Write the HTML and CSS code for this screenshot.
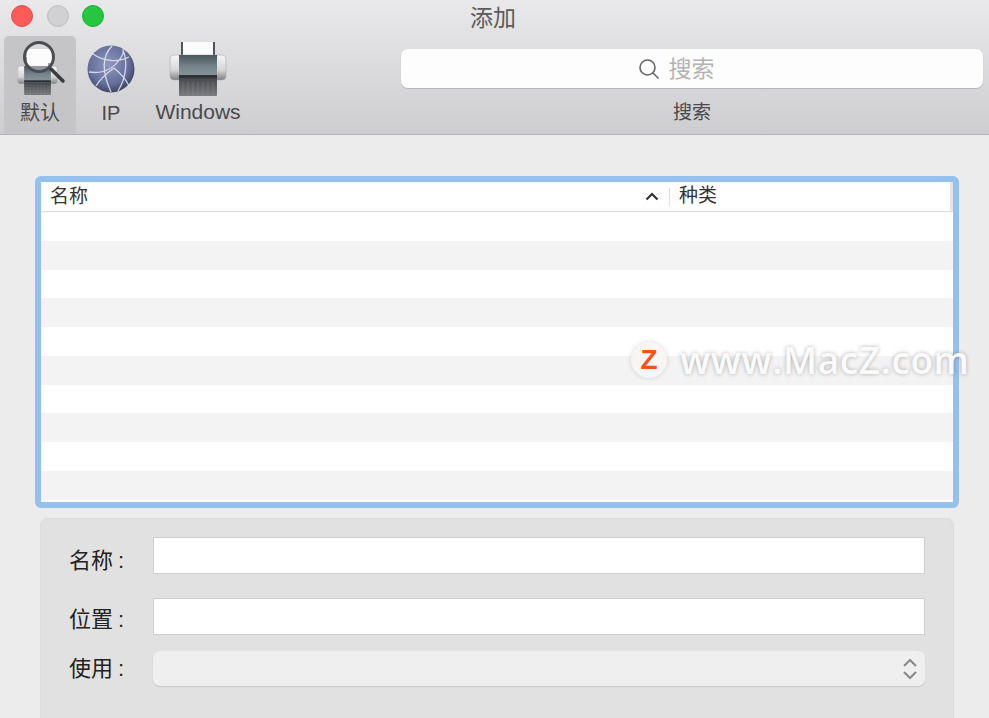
FILE: index.html
```html
<!DOCTYPE html>
<html>
  <head>
  <meta charset="UTF-8">
  <meta name="viewport" content="width=device-width,initial-scale=1.0">
  <link rel="stylesheet" href="styles.css">
  </head>
  <body>
    <svg class="defs" width="0" height="0">
      <defs>
        <linearGradient id="p_side" x1="0" y1="0" x2="0" y2="1">
          <stop offset="0" stop-color="#f6f6f6"/>
          <stop offset="0.6" stop-color="#d6d6d6"/>
          <stop offset="1" stop-color="#7d7f81"/>
        </linearGradient>
        <linearGradient id="p_body" x1="0" y1="0" x2="0" y2="1">
          <stop offset="0" stop-color="#4c565d"/>
          <stop offset="0.5" stop-color="#75838b"/>
          <stop offset="1" stop-color="#8a979e"/>
        </linearGradient>
        <linearGradient id="p_tray" x1="0" y1="0" x2="0" y2="1">
          <stop offset="0" stop-color="#45484b"/>
          <stop offset="1" stop-color="#7a7c7e"/>
        </linearGradient>
        <radialGradient id="g_ball" cx="0.45" cy="0.4" r="0.65">
          <stop offset="0" stop-color="#8f98bd"/>
          <stop offset="0.65" stop-color="#646f9b"/>
          <stop offset="1" stop-color="#363b55"/>
        </radialGradient>
        <symbol id="printer" viewBox="0 0 58 54">
          <rect x="12" y="0" width="34" height="15" fill="#50565a"/>
          <rect x="14" y="0" width="30" height="14" fill="#fbfbfb"/>
          <rect x="1" y="13" width="56" height="25" rx="4" fill="url(#p_side)" stroke="#a9aaab" stroke-width=".6"/>
          <rect x="10" y="13" width="38" height="23" fill="url(#p_body)"/>
          <rect x="10" y="33" width="38" height="3" fill="#2f3336"/>
          <path d="M10 36h38v17a1 1 0 0 1-1 1H11a1 1 0 0 1-1-1z" fill="url(#p_tray)"/>
          <path d="M14 40v13M19 40v13M24 40v13M29 40v13M34 40v13M39 40v13M44 40v13" stroke="#8c8e90" stroke-width="1" opacity=".4"/>
        </symbol>
      </defs>
    </svg>

    <div class="toolbar">
      <div class="title_row">
        <div class="lights">
          <span class="light red"></span>
          <span class="light grey"></span>
          <span class="light green"></span>
        </div>
        <div class="title">添加</div>
      </div>
      <div class="tool_row">
        <div class="tool tool_default">
          <div class="tool_icon">
            <svg class="icon_default" width="54" height="62" viewBox="0 0 54 62">
              <use href="#printer" x="2" y="21" width="41" height="38"/>
              <rect x="12" y="13" width="25" height="14" fill="#fbfbfb"/>
              <circle cx="24" cy="21" r="14.5" fill="#fff" fill-opacity=".35" stroke="#4b4e50" stroke-width="3"/>
              <path d="M36 33l12 12" stroke="#3a3c3e" stroke-width="3.5" stroke-linecap="round"/>
            </svg>
          </div>
          <span class="tool_label">默认</span>
        </div>
        <div class="tool tool_ip">
          <div class="tool_icon">
            <svg width="48" height="48" viewBox="0 0 48 48">
              <circle cx="24" cy="24" r="23.5" fill="url(#g_ball)"/>
              <path d="M6 9c10 7 24 9 36 3M2 27c13 2 24-3 31-13 3-4 4-7 3-10M25 1c-9 9-11 24-1 46M27 23c6 5 12 11 15 18M27 23c-7 5-14 11-18 18M36 5c5 12 3 28-5 41" fill="none" stroke="#e6e9f8" stroke-width="1.3" opacity=".85"/>
            </svg>
          </div>
          <span class="tool_label">IP</span>
        </div>
        <div class="tool tool_win">
          <div class="tool_icon">
            <svg width="58" height="54"><use href="#printer" width="58" height="54"/></svg>
          </div>
          <span class="tool_label">Windows</span>
        </div>
        <div class="search_block">
          <div class="search_field">
            <svg class="search_glass" width="22" height="22" viewBox="0 0 22 22">
              <circle cx="9.5" cy="9.5" r="7.5" fill="none" stroke="#666" stroke-width="1.6"/>
              <path d="M15 15l5.5 5.5" stroke="#666" stroke-width="1.6"/>
            </svg>
            <span class="search_hint">搜索</span>
          </div>
          <span class="search_label">搜索</span>
        </div>
      </div>
    </div>

    <div class="content">
      <div class="list_frame">
        <div class="list_head">
          <div class="col_name">
            <span>名称</span>
            <svg class="sort_arrow" width="14" height="9" viewBox="0 0 14 9">
              <path d="M1.5 7.5L7 2l5.5 5.5" fill="none" stroke="#333" stroke-width="2.2"/>
            </svg>
          </div>
          <div class="col_kind">种类</div>
        </div>
        <div class="list_rows">
          <div class="list_row"></div>
          <div class="list_row"></div>
          <div class="list_row"></div>
          <div class="list_row"></div>
          <div class="list_row"></div>
          <div class="list_row"></div>
          <div class="list_row"></div>
          <div class="list_row"></div>
          <div class="list_row"></div>
          <div class="list_row"></div>
        </div>
      </div>

      <div class="info_panel">
        <div class="info_row row_name">
          <span class="info_label">名称<span class="colon">:</span></span>
          <div class="info_input"></div>
        </div>
        <div class="info_row row_place">
          <span class="info_label">位置<span class="colon">:</span></span>
          <div class="info_input"></div>
        </div>
        <div class="info_row row_use">
          <span class="info_label">使用<span class="colon">:</span></span>
          <div class="info_select">
            <svg width="16" height="26" viewBox="0 0 16 26">
              <path d="M2 10l6-6 6 6M2 16l6 6 6-6" fill="none" stroke="#8a8a8a" stroke-width="2.2"/>
            </svg>
          </div>
        </div>
      </div>
    </div>

    <div class="watermark">
      <span class="mark_logo">Z</span>
      <span class="mark_text">www.MacZ.com</span>
    </div>
  </body>
</html>
```

FILE: styles.css
```css
*{
  margin:0;
  padding:0;
  box-sizing:border-box;
}
html,body{
  height:100%;
  overflow:hidden;
}
body{
  position:relative;
  background-color:#ececec;
  font-family:"Liberation Sans","Noto Sans CJK SC",sans-serif;
}
.defs{
  position:absolute;
}
.toolbar{
  height:135px;
  background:linear-gradient(#e9e8ea,#cdcccf);
  border-bottom:1px solid #b4b3b5;
}
.title_row{
  position:relative;
  height:36px;
}
.lights{
  display:flex;
  gap:14px;
  padding:5px 0 0 11px;
}
.light{
  width:22px;
  height:22px;
  border-radius:50%;
}
.light.red{
  background-color:#fc5b57;
  border:1px solid #e5504c;
}
.light.grey{
  background-color:#d2d1d2;
  border:1px solid #c0bfc0;
}
.light.green{
  background-color:#27c63f;
  border:1px solid #22ae35;
  margin-left:-1px;
}
.title{
  position:absolute;
  top:3px;
  left:0;
  width:100%;
  padding-right:3px;
  text-align:center;
  font-size:23px;
  line-height:30px;
  color:#5c5b5c;
}
.tool_row{
  display:flex;
  height:98px;
  padding-left:4px;
}
.tool{
  display:flex;
  flex-direction:column;
  align-items:center;
}
.tool_default{
  width:72px;
  background-color:#c5c4c6;
  border-radius:5px 5px 0 0;
}
.tool_ip{
  width:70px;
}
.tool_win{
  width:104px;
}
.tool_icon{
  display:flex;
  justify-content:center;
  align-items:flex-end;
  height:60px;
}
.icon_default{
  margin-left:4px;
  margin-bottom:-2px;
}
.tool_ip .tool_icon{
  padding-bottom:3px;
}
.tool_label{
  margin-top:4px;
  font-size:20px;
  line-height:26px;
  color:#4a494b;
}
.tool_win .tool_label{
  margin-top:3px;
  font-size:21px;
}
.search_block{
  display:flex;
  flex-direction:column;
  align-items:center;
  width:582px;
  margin-left:151px;
  padding-top:13px;
}
.search_field{
  display:flex;
  justify-content:center;
  align-items:center;
  gap:9px;
  width:100%;
  height:39px;
  background-color:#fdfdfd;
  border-radius:7px;
  box-shadow:0 1px 1px #b5b4b6;
  padding-right:32px;
}
.search_glass{
  margin-top:1px;
}
.search_hint{
  padding-top:2px;
  font-size:23px;
  line-height:37px;
  color:#b2b2b2;
}
.search_label{
  margin-top:12px;
  font-size:19px;
  line-height:26px;
  color:#4a494b;
}
.content{
  display:flex;
  flex-direction:column;
  padding:41px 30px 0 35px;
}
.list_frame{
  width:924px;
  height:332px;
  background-color:#fbfbfb;
  border:6px solid #94c0ee;
  border-radius:6px;
  overflow:hidden;
}
.list_head{
  display:flex;
  align-items:center;
  height:30px;
  background-color:#fff;
  border-bottom:1px solid #dcdcdc;
  font-size:19px;
  color:#333;
}
.col_name{
  display:flex;
  justify-content:space-between;
  align-items:center;
  width:629px;
  height:18px;
  padding:0 10px 0 9px;
  border-right:1px solid #dedede;
}
.col_kind{
  flex:1;
  height:100%;
  padding-left:9px;
  line-height:28px;
  border-right:3px solid #e4e4e4;
}
.col_name span{
  line-height:18px;
}
.list_row{
  height:28.75px;
  background-color:#fff;
}
.list_row:nth-child(even){
  background-color:#f3f3f3;
}
.info_panel{
  display:flex;
  flex-direction:column;
  width:914px;
  height:220px;
  margin:10px 0 0 5px;
  padding:18px 28px 0 0;
  background-color:#e1e1e1;
  border:1px solid #dcdcdc;
  border-radius:7px;
}
.info_row{
  display:flex;
  align-items:center;
}
.row_place{
  margin-top:24px;
}
.row_use{
  margin-top:15px;
}
.info_label{
  width:112px;
  padding-left:28px;
  font-size:22px;
  color:#222;
  white-space:nowrap;
}
.row_name .info_label{
  margin-top:5px;
}
.row_use .info_label{
  margin-bottom:5px;
}
.colon{
  margin-left:5px;
}
.info_input{
  flex:1;
  height:37px;
  background-color:#fff;
  border:1px solid #cfcfcf;
}
.info_select{
  display:flex;
  justify-content:flex-end;
  align-items:center;
  flex:1;
  height:35px;
  padding-right:7px;
  background-color:#efefef;
  border-radius:7px;
  box-shadow:0 1px 1px #c4c4c4;
}
.watermark{
  position:absolute;
  top:340px;
  left:631px;
  display:flex;
  align-items:center;
  gap:13px;
}
.mark_logo{
  width:36px;
  height:36px;
  border-radius:50%;
  background-color:#f8f6f4;
  box-shadow:0 0 5px rgba(0,0,0,.15);
  text-align:center;
  font-size:28px;
  font-weight:bold;
  line-height:36px;
  color:#f4511e;
}
.mark_text{
  font-family:"Open Sans",sans-serif;
  font-size:37px;
  font-weight:600;
  line-height:40px;
  color:#fafafa;
  letter-spacing:0.6px;
  text-shadow:0 0 4px rgba(0,0,0,.3);
  white-space:nowrap;
}
```
